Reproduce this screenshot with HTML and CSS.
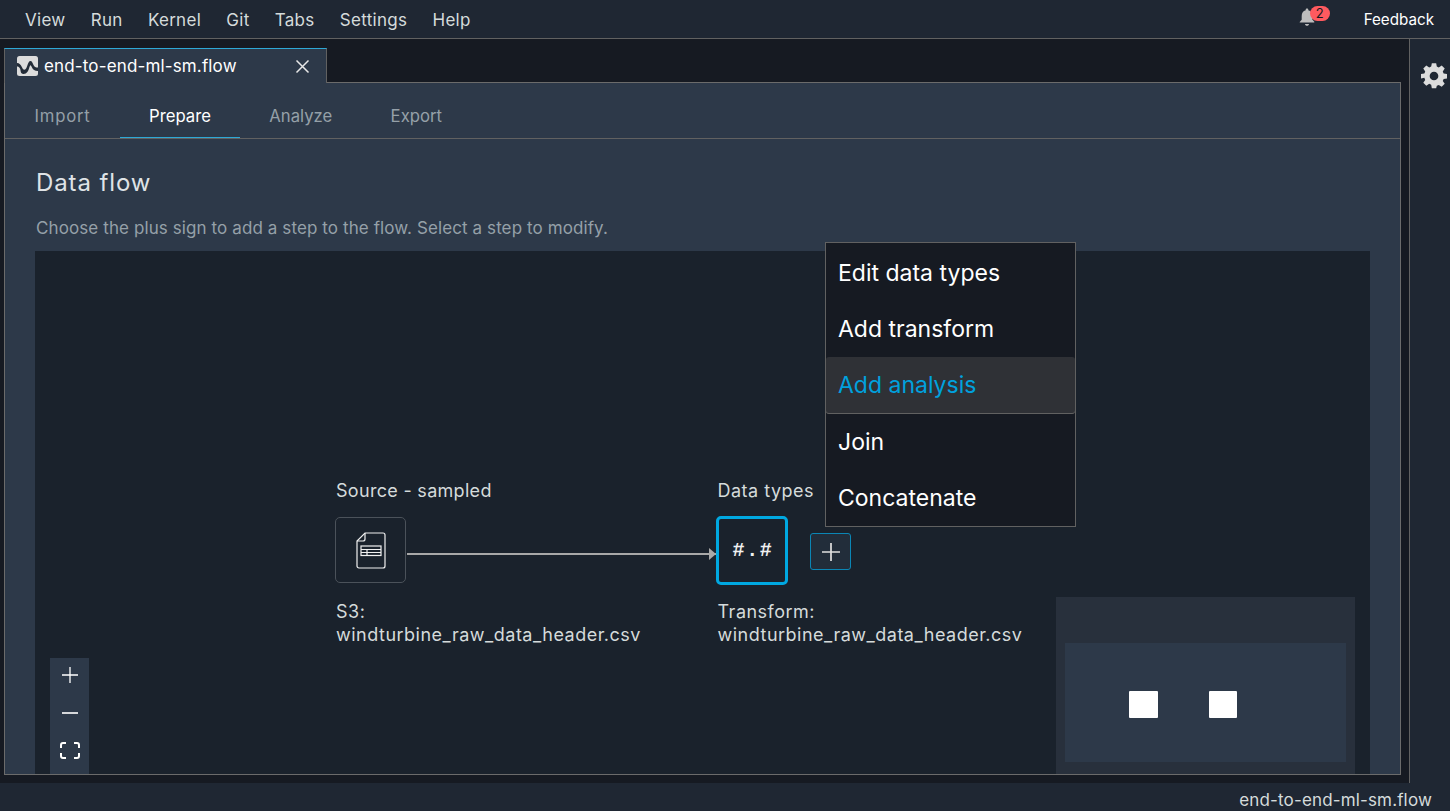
FILE: index.html
```html
<!DOCTYPE html>
<html lang="en">
<head>
<meta charset="utf-8">
<title>end-to-end-ml-sm.flow</title>
<link rel="stylesheet" href="styles.css">
</head>
<body>
<div class="app">
  <header class="topbar">
    <nav class="menus">
      <span>View</span><span>Run</span><span>Kernel</span><span>Git</span><span>Tabs</span><span>Settings</span><span>Help</span>
    </nav>
    <div class="top-right">
      <div class="bell">
        <svg width="18" height="20" viewBox="0 0 18 20"><path d="M9 1.500c.8 0 1.300.5 1.300 1.300v.5c2.600.7 4 3 4 5.700v3.500l2 2.300v.7H1.700V15l2-2.300V9c0-2.700 1.400-5 4-5.700v-.5C7.700 2 8.200 1.500 9 1.500z M7 17h4c0 1.200-.9 1.800-2 1.800s-2-.6-2-1.800z" fill="#bdbdbd"/></svg>
        <span class="badge">2</span>
      </div>
      <span class="feedback">Feedback</span>
    </div>
  </header>
  <div class="body">
    <main class="dock">
      <div class="tabstrip">
        <div class="doc-tab">
          <svg class="flow-icon" width="21" height="20" viewBox="0 0 21 20"><rect width="21" height="20" rx="2.500" fill="#dcdcdc"/><path d="M0 7c2.500 0 3.700 1.800 4.700 3.800s1.300 3 2.800 3 2.200-2.500 3-4.800 1.500-4 3-4 2 2 3 4 2 2.500 4.500 2.500v3.500c-3.500 0-5-1.500-6-3.500s-1.200-2.300-1.500-2.300-.8 1-1.500 3.300-2 5.500-5.500 5.500S4 14 3 12.500 1.500 10.500 0 10.500z" fill="#232c38"/></svg>
          <span class="doc-title">end-to-end-ml-sm.flow</span>
          <svg class="close" width="15" height="15" viewBox="0 0 15 15"><path d="M1.500 1.500l12 12M13.500 1.500l-12 12" stroke="#e8e8e8" stroke-width="1.500" fill="none"/></svg>
        </div>
      </div>
      <section class="panel">
        <div class="subtabs">
          <span class="subtab first">Import</span>
          <span class="subtab active">Prepare</span>
          <span class="subtab">Analyze</span>
          <span class="subtab">Export</span>
        </div>
        <div class="content">
          <h1>Data flow</h1>
          <p class="hint">Choose the plus sign to add a step to the flow. Select a step to modify.</p>
          <div class="canvas">
            <div class="node-label source-label">Source - sampled</div>
            <div class="node source-node">
              <svg width="30" height="37" viewBox="0 0 30 37" fill="none" stroke="#f0f0f0" stroke-width="1.200"><path d="M9 1h18a2 2 0 0 1 2 2v31a2 2 0 0 1-2 2H3a2 2 0 0 1-2-2V9z"/><path d="M9 1v6a2 2 0 0 1-2 2H1"/><rect x="5" y="14" width="20" height="9.500"/><path d="M5 17.500h20M5 20.500h20M11 17.500v6"/></svg>
            </div>
            <div class="node-caption source-caption">S3:<br>windturbine_raw_data_header.csv</div>
            <div class="edge"></div>
            <div class="node-label types-label">Data types</div>
            <div class="node types-node">#.#</div>
            <div class="add-btn">
              <svg width="20" height="20" viewBox="0 0 20 20"><path d="M10 1v18M1 10h18" stroke="#e0e0e0" stroke-width="1.700"/></svg>
            </div>
            <div class="node-caption types-caption">Transform:<br>windturbine_raw_data_header.csv</div>

            <div class="zoom-ctl">
              <svg width="16" height="16" viewBox="0 0 16 16"><path d="M8 0v16M0 8h16" stroke="#fff" stroke-width="1.300"/></svg>
              <svg width="16" height="16" viewBox="0 0 16 16"><path d="M0 8h16" stroke="#fff" stroke-width="1.600"/></svg>
              <svg width="20" height="17" viewBox="0 0 20 17" fill="none" stroke="#fff" stroke-width="2"><path d="M1 6V3a2 2 0 0 1 2-2h3M14 1h3a2 2 0 0 1 2 2v3M19 11v3a2 2 0 0 1-2 2h-3M6 16H3a2 2 0 0 1-2-2v-3"/></svg>
            </div>
            <div class="minimap">
              <div class="viewport">
                <span class="mini-node first"></span>
                <span class="mini-node second"></span>
              </div>
            </div>
          </div>
        </div>
      </section>
      <ul class="menu">
        <li>Edit data types</li>
        <li>Add transform</li>
        <li class="hover">Add analysis</li>
        <li>Join</li>
        <li>Concatenate</li>
      </ul>
    </main>
    <aside class="sidebar">
      <svg width="26" height="26" viewBox="0 0 24 24"><path fill="#dcdcdc" fill-rule="evenodd" d="M10 1h4l.6 3.100 1.800.8 2.700-1.800 2.800 2.800-1.800 2.700.8 1.800L24 11v4l-3.100.5-.8 1.900 1.800 2.600-2.800 2.800-2.700-1.800-1.800.8L14 24h-4l-.6-3.200-1.800-.8-2.700 1.800-2.800-2.800 1.800-2.600-.8-1.900L0 15v-4l3.100-.6.800-1.800-1.800-2.700 2.800-2.800 2.700 1.800 1.800-.8zM12 8.800a4 4 0 1 0 0 8 4 4 0 0 0 0-8z" transform="translate(0 -.8)"/></svg>
    </aside>
  </div>
  <footer class="status">end-to-end-ml-sm.flow</footer>
</div>
</body>
</html>
```
FILE: styles.css
```css
* { box-sizing: border-box; }
html, body { margin: 0; height: 100%; overflow: hidden; }
body { font-family: "Inter", "Noto Sans", sans-serif; background: #161a22; color: #e0e0e0; }
.app { display: flex; flex-direction: column; width: 1450px; height: 811px; }

.topbar { height: 39px; flex: none; display: flex; justify-content: space-between; align-items: center; background: #1f2733; border-bottom: 1px solid #616161; }
.menus { display: flex; gap: 25.200px; padding: 2px 0 0 25px; font-size: 17px; letter-spacing: .3px; color: #d5dbdb; }
.top-right { display: flex; align-items: center; }
.bell { position: relative; width: 20px; height: 20px; margin-right: 47px; left: 1px; top: -2px; }
.badge { position: absolute; left: 12px; top: -1px; width: 20px; height: 15px; border-radius: 8px; background: #ff5a5f; color: #161a22; font-size: 13px; line-height: 15px; text-align: center; }
.feedback { font-size: 15.200px; color: #fff; margin-right: 16px; }

.body { flex: 1; display: flex; min-height: 0; }
.dock { position: relative; flex: none; width: 1410px; padding: 9px 8px 8px 4px; display: flex; flex-direction: column; border-right: 1px solid #616161; }
.tabstrip { height: 34px; flex: none; display: flex; position: relative; z-index: 1; }
.doc-tab { width: 323px; height: 35px; display: flex; align-items: center; padding-left: 12px; background: #2d3949; border: 1px solid #616161; border-top: 1px solid #2ea8d5; border-bottom: 0; }
.doc-title { font-size: 17px; letter-spacing: .15px; color: #fff; margin-left: 6px; }
.close { margin-left: auto; margin-right: 16px; }
.panel { flex: 1; min-height: 0; display: flex; flex-direction: column; background: #2d3949; border: 1px solid #6b6b6b; width: 1397px; }
.subtabs { height: 56px; flex: none; display: flex; border-bottom: 1px solid #616161; font-size: 16.700px; color: #95a0a8; }
.subtab { display: flex; align-items: center; justify-content: center; padding: 10px 29.200px 0; height: 55px; }
.subtab.first { letter-spacing: .8px; padding-left: 29.500px; }
.subtab.active { color: #fff; box-shadow: inset 0 -1px 0 #2ea8d5; }
.content { flex: 1; min-height: 0; display: flex; flex-direction: column; padding: 0 30px; }
h1 { margin: 28px 0 0; padding-left: 1px; font-size: 24px; letter-spacing: .9px; line-height: 32px; font-weight: 400; color: #dfe3e6; }
.hint { margin: 17px 0 0; padding-left: 1px; font-size: 17px; letter-spacing: .1px; line-height: 24px; color: #95a0a8; }
.canvas { position: relative; flex: 1; margin-top: 11px; background: #1a222c; overflow: hidden; }

.node-label, .node-caption { position: absolute; font-size: 18px; line-height: 23px; color: #d5dbdb; white-space: nowrap; }
.node-label { letter-spacing: .3px; }
.node-caption { letter-spacing: .5px; }
.source-label { left: 301px; top: 228px; }
.types-label { left: 682.500px; top: 228px; letter-spacing: .5px; }
.source-caption { left: 301px; top: 348.500px; }
.types-caption { left: 682.500px; top: 348.500px; }
.node { position: absolute; display: flex; align-items: center; justify-content: center; }
.source-node { left: 300px; top: 266px; width: 71px; height: 66px; border: 1px solid #4b525a; border-radius: 5px; }
.types-node { left: 681px; top: 265px; width: 72px; height: 69px; padding-left: 2px; border: 3px solid #00a8e1; border-radius: 5px; font-family: "Liberation Mono", monospace; font-weight: 700; font-size: 20px; letter-spacing: 1.600px; color: #f0f0f0; }
.edge { position: absolute; left: 372px; top: 302px; width: 309px; height: 2px; background: #a8a8a8; }
.edge::after { content: ""; position: absolute; right: 0; top: -5px; border-left: 7px solid #a8a8a8; border-top: 6px solid transparent; border-bottom: 6px solid transparent; }
.add-btn { position: absolute; left: 775px; top: 282px; width: 41px; height: 37px; display: flex; align-items: center; justify-content: center; background: #222d3a; border: 1px solid #0b86b5; border-radius: 3px; }

.zoom-ctl { position: absolute; left: 15px; bottom: 0; width: 39px; height: 116px; padding: 9px 0 15px; display: flex; flex-direction: column; align-items: center; justify-content: space-between; background: #2d3949; }
.minimap { position: absolute; right: 15px; bottom: 0; width: 299px; height: 177px; padding: 46px 9px 12px; background: #28303c; }
.viewport { position: relative; height: 119px; background: #2d3949; }
.mini-node { position: absolute; top: 48px; height: 27px; background: #fff; border-radius: 1px; }
.mini-node.first { left: 64px; width: 29px; }
.mini-node.second { left: 144px; width: 28px; }

.menu { position: absolute; left: 825px; top: 203px; width: 251px; height: 285px; margin: 0; padding: 1.500px 0 0; list-style: none; background: #161a22; border: 1px solid #616161; z-index: 5; font-size: 23px; color: #fff; }
.menu li { height: 56.400px; padding-left: 12px; display: flex; align-items: center; }
.menu li.hover { color: #00a1de; background: #2f3136; box-shadow: inset 0 -1px 0 #616161; border-radius: 3px; }

.sidebar { flex: 1; display: flex; justify-content: center; align-items: flex-start; padding: 24px 0 0 8px; background: #1f2733; }
.status { height: 28px; flex: none; background: #1f2733; text-align: right; padding-right: 18px; font-size: 17px; letter-spacing: .15px; line-height: 34px; color: #d5dbdb; }
```
